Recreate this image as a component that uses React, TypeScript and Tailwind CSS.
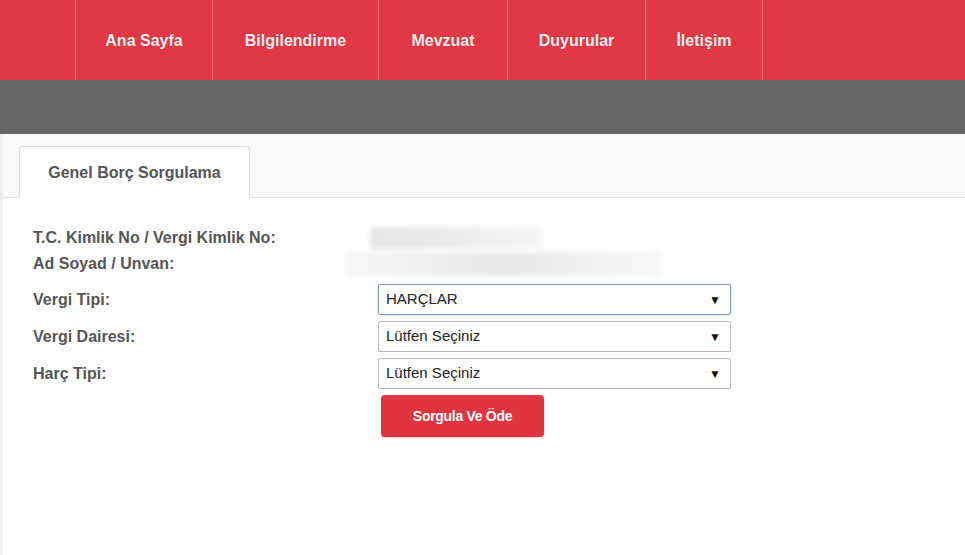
import React from 'react'

const navItems = [
  { label: 'Ana Sayfa', width: 'w-[137px]' },
  { label: 'Bilgilendirme', width: 'w-[166px]' },
  { label: 'Mevzuat', width: 'w-[129px]' },
  { label: 'Duyurular', width: 'w-[138px]' },
  { label: 'İletişim', width: 'w-[117px]' },
]

function FakeSelect({ value, focused }: { value: string; focused?: boolean }) {
  return (
    <div
      className={`flex h-[31px] w-[353px] items-center justify-between rounded-[2px] border bg-white pl-[7px] pr-[9px] text-[15px] font-normal text-[#222] ${
        focused ? 'border-[#7f9db9] shadow-[0_0_2px_rgba(100,140,190,0.5)]' : 'border-[#b5b5b5]'
      }`}
    >
      <span>{value}</span>
      <span className="text-[12px] text-[#111]">▼</span>
    </div>
  )
}

export default function App() {
  return (
    <div className="flex min-h-[555px] flex-col bg-white font-['Liberation_Sans',Arial,sans-serif]">
      {/* üst menü */}
      <nav className="h-[80px] bg-[#e03844] pl-[75px]">
        <ul className="flex h-full border-l border-[#ee737b]">
          {navItems.map((item) => (
            <li
              key={item.label}
              className={`${item.width} flex h-full items-center justify-center border-r border-[#ee737b] pt-[2px] text-[16px] font-bold text-[#fdf0f1] [text-shadow:0_0_1px_rgba(120,0,0,0.3)]`}
            >
              {item.label}
            </li>
          ))}
        </ul>
      </nav>
      <div className="h-[54px] bg-[#666666]" />

      <div className="flex-1 border-l-[3px] border-[#efefef]">
        {/* sekmeler */}
        <div className="flex h-[64px] items-end border-b border-[#e2e2e2] bg-[#f9f9f9] pl-[16px]">
          <div className="-mb-px flex h-[52px] w-[231px] items-center justify-center rounded-t-[4px] border border-b-white border-[#dcdcdc] bg-white pt-[2px] text-[16px] font-bold text-[#555]">
            Genel Borç Sorgulama
          </div>
        </div>

        {/* form */}
        <div className="pl-[30px] pt-[27px] text-[16px] font-bold text-[#555]">
          <div className="flex h-[26px] items-center">
            <div className="w-[345px]">T.C. Kimlik No / Vergi Kimlik No:</div>
            <div className="-ml-[8px] h-[22px] w-[172px] bg-gradient-to-r from-[#e6e6e6] via-[#ececec] to-[#f6f6f6] blur-[2px]" />
          </div>
          <div className="flex h-[26px] items-center">
            <div className="w-[345px]">Ad Soyad / Unvan:</div>
            <div className="-ml-[33px] h-[24px] w-[317px] bg-gradient-to-r from-[#f7f7f7] via-[#e8e8e8] to-[#f8f8f8] blur-[2px]" />
          </div>

          <div className="mt-[7px] flex flex-col gap-[6px]">
            <div className="flex items-center">
              <div className="w-[345px]">Vergi Tipi:</div>
              <FakeSelect value="HARÇLAR" focused />
            </div>
            <div className="flex items-center">
              <div className="w-[345px]">Vergi Dairesi:</div>
              <FakeSelect value="Lütfen Seçiniz" />
            </div>
            <div className="flex items-center">
              <div className="w-[345px]">Harç Tipi:</div>
              <FakeSelect value="Lütfen Seçiniz" />
            </div>
            <div className="flex">
              <div className="w-[348px]" />
              <button className="h-[42px] w-[163px] rounded-[4px] bg-[#e0343f] text-[14px] font-bold tracking-[-0.3px] text-white shadow-[0_1px_2px_rgba(0,0,0,0.2)]">
                Sorgula Ve Öde
              </button>
            </div>
          </div>
        </div>
      </div>
    </div>
  )
}
